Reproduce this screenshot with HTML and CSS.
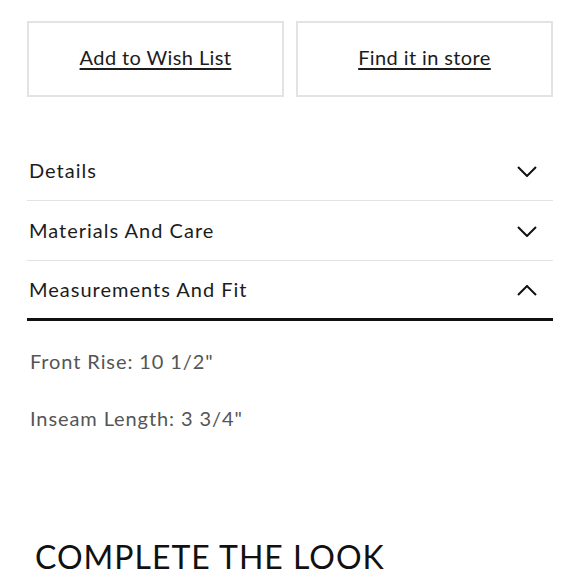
FILE: index.html
```html
<!DOCTYPE html>
<html lang="en">
<head>
  <meta charset="UTF-8">
  <meta name="viewport" content="width=device-width, initial-scale=1.0">
  <title>Product details</title>
  <link rel="stylesheet" href="styles.css">
</head>
<body>
  <div id="page">
    <div class="actions">
      <a class="action" href="#">Add to Wish List</a>
      <a class="action" href="#">Find it in store</a>
    </div>

    <div class="accordion">
      <div class="acc-row">
        <span>Details</span>
        <svg class="chevron" width="20" height="11" viewBox="0 0 20 11"><polyline points="1,1 10,10 19,1"/></svg>
      </div>
      <div class="acc-row">
        <span>Materials And Care</span>
        <svg class="chevron" width="20" height="11" viewBox="0 0 20 11"><polyline points="1,1 10,10 19,1"/></svg>
      </div>
      <div class="acc-row open">
        <span>Measurements And Fit</span>
        <svg class="chevron" width="20" height="11" viewBox="0 0 20 11"><polyline points="1,10 10,1 19,10"/></svg>
      </div>
      <div class="acc-panel">
        <p>Front Rise: 10 1/2"</p>
        <p>Inseam Length: 3 3/4"</p>
      </div>
    </div>

    <h2 class="look-title">COMPLETE THE LOOK</h2>
  </div>
</body>
</html>
```

FILE: styles.css
```css
body {
  margin: 0;
  background: #fff;
  font-family: Lato, "Open Sans", sans-serif;
  color: #1c1c1c;
}
#page {
  padding: 21px 27px 0;
}
.actions {
  display: grid;
  grid-template-columns: 1fr 1fr;
  gap: 12px;
}
.action {
  display: flex;
  align-items: center;
  justify-content: center;
  height: 76px;
  box-sizing: border-box;
  padding-bottom: 4px;
  border: 2px solid #e3e3e3;
  font-size: 20px;
  letter-spacing: 0.4px;
  color: #1c1c1c;
  text-decoration: underline;
  text-underline-offset: 3px;
  text-decoration-thickness: 2px;
}
.accordion {
  margin-top: 44px;
}
.acc-row {
  display: flex;
  align-items: center;
  justify-content: space-between;
  height: 60px;
  box-sizing: border-box;
  padding: 0 16px 2px 2px;
  border-bottom: 1px solid #e3e3e3;
  font-size: 20px;
  letter-spacing: 1px;
}
.acc-row .chevron {
  margin-top: 4px;
}
.acc-row.open {
  border-bottom: 3px solid #111;
}
.chevron {
  fill: none;
  stroke: #111;
  stroke-width: 2;
}
.acc-panel {
  padding: 29px 3px 0;
}
.acc-panel p {
  margin: 0 0 34px;
  line-height: 23px;
  font-size: 20px;
  letter-spacing: 0.9px;
  color: #555;
}
.look-title {
  margin: 107px 0 0 8px;
  font-size: 32px;
  font-weight: 400;
  letter-spacing: 1px;
  color: #111;
}
```
